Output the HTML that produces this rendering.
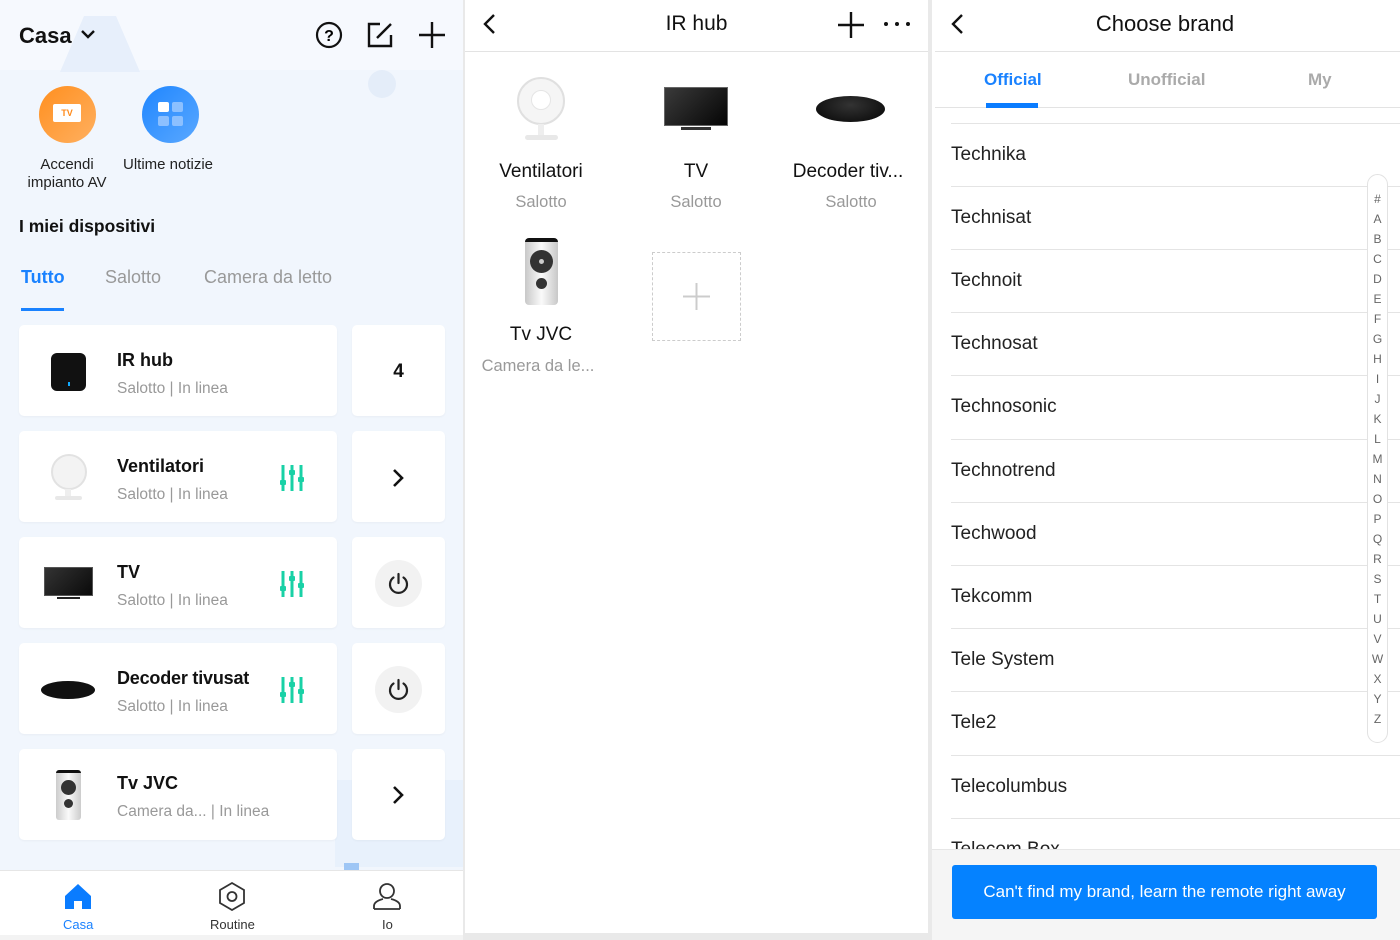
<!DOCTYPE html>
<html><head><meta charset="utf-8"><style>
*{margin:0;padding:0;box-sizing:border-box}
body{width:1400px;height:940px;overflow:hidden;background:#e9e9e9;font-family:"Liberation Sans",Roboto,sans-serif;position:relative;color:#111}
.abs{position:absolute}
#L{left:0;top:0;width:463px;height:940px;background:#f1f6fd;overflow:hidden}
#M{left:465px;top:0;width:463px;height:933px;background:#fff}
#R{left:932px;top:0;width:468px;height:940px;background:#fff}
.card{position:absolute;background:#fff;border-radius:5px;box-shadow:0 1px 2px rgba(0,0,0,.04)}
.nm{position:absolute;left:117px;font-size:18px;font-weight:bold;color:#111}
.sb{position:absolute;left:117px;font-size:15.5px;color:#999}
.row{position:absolute;left:951px;right:0;height:1px;background:#e4e4e4}
.br{position:absolute;left:951px;font-size:19px;color:#222}
.gi{position:absolute;text-align:center;width:150px}
</style></head><body>
<div id="L" class="abs">
  <div class="abs" style="left:0;top:0;width:463px;height:70px;background:#f6f9fe"></div>
  <div class="abs" style="left:60px;top:16px;width:80px;height:56px;background:#e7effb;clip-path:polygon(30% 0,70% 0,100% 100%,0 100%)"></div>
  <div class="abs" style="left:368px;top:70px;width:28px;height:28px;border-radius:50%;background:#e4edf9"></div>
  <div class="abs" style="left:19px;top:23px;font-size:22px;font-weight:bold">Casa</div>
  <svg class="abs" style="left:80px;top:28px" width="16" height="12"><path d="M2 3l6 6 6-6" fill="none" stroke="#111" stroke-width="2.4"/></svg>
  <svg class="abs" style="left:314px;top:20px" width="30" height="30"><circle cx="15" cy="15" r="12" fill="none" stroke="#111" stroke-width="2.2"/><text x="15" y="21" font-size="16" font-weight="bold" text-anchor="middle" font-family="Liberation Sans">?</text></svg>
  <svg class="abs" style="left:366px;top:21px" width="28" height="28"><path d="M14 3H3v22h22V14" fill="none" stroke="#111" stroke-width="2.4"/><path d="M11 17L25 3" stroke="#111" stroke-width="2.4"/></svg>
  <svg class="abs" style="left:417px;top:20px" width="30" height="30"><path d="M15 2v26M2 15h26" stroke="#111" stroke-width="2.4"/></svg>
  <div class="abs" style="left:39px;top:86px;width:57px;height:57px;border-radius:50%;background:linear-gradient(135deg,#ff8f1f,#ffb060)"></div>
  <div class="abs" style="left:53px;top:104px;width:28px;height:18px;background:#fff;border-radius:2px;font-size:9px;font-weight:bold;color:#ff8a1a;text-align:center;line-height:18px">TV</div>
  <div class="abs" style="left:142px;top:86px;width:57px;height:57px;border-radius:50%;background:linear-gradient(135deg,#1f86ff,#5aa8ff)"></div>
  <div class="abs" style="left:158px;top:102px;width:11px;height:10px;background:#fff;border-radius:2px"></div>
  <div class="abs" style="left:172px;top:102px;width:11px;height:10px;background:#8cc0ff;border-radius:2px"></div>
  <div class="abs" style="left:158px;top:116px;width:11px;height:10px;background:#8cc0ff;border-radius:2px"></div>
  <div class="abs" style="left:172px;top:116px;width:11px;height:10px;background:#8cc0ff;border-radius:2px"></div>
  <div class="abs" style="left:12px;top:156px;width:110px;text-align:center;font-size:15px;line-height:18px;color:#222">Accendi impianto AV</div>
  <div class="abs" style="left:123px;top:156px;font-size:15px;color:#222">Ultime notizie</div>
  <div class="abs" style="left:19px;top:216px;font-size:17.5px;font-weight:bold">I miei dispositivi</div>
  <div class="abs" style="left:21px;top:267px;font-size:18px;font-weight:bold;color:#1a82ff">Tutto</div>
  <div class="abs" style="left:21px;top:308px;width:43px;height:3px;background:#1a82ff"></div>
  <div class="abs" style="left:105px;top:267px;font-size:18px;color:#999">Salotto</div>
  <div class="abs" style="left:204px;top:267px;font-size:18px;color:#999">Camera da letto</div>

  <div class="abs" style="left:335px;top:780px;width:128px;height:87px;background:#e8f1fc"></div>
  <div class="abs" style="left:344px;top:863px;width:15px;height:7px;background:#9ec6f5"></div>

  <div class="card" style="left:19px;top:325px;width:318px;height:91px"></div>
  <div class="card" style="left:352px;top:325px;width:93px;height:91px;text-align:center;line-height:94px;font-size:19px;font-weight:bold">4</div>
  <div class="abs" style="left:51px;top:353px;width:35px;height:38px;background:#111;border-radius:6px"></div>
  <div class="abs" style="left:68px;top:382px;width:2px;height:4px;background:#1af"></div>
  <div class="nm" style="top:350px">IR hub</div><div class="sb" style="top:380px">Salotto | In linea</div>
  <div class="card" style="left:19px;top:431px;width:318px;height:91px"></div>
  <div class="card" style="left:352px;top:431px;width:93px;height:91px"></div>
  <div class="abs" style="left:51px;top:454px;width:36px;height:36px;border-radius:50%;background:#f3f3f3;border:2px solid #e2e2e2"></div>
  <div class="abs" style="left:65px;top:489px;width:6px;height:8px;background:#eee"></div>
  <div class="abs" style="left:55px;top:496px;width:27px;height:4px;border-radius:2px;background:#e8e8e8"></div>
  <div class="nm" style="top:456px">Ventilatori</div><div class="sb" style="top:486px">Salotto | In linea</div>
  <div class="card" style="left:19px;top:537px;width:318px;height:91px"></div>
  <div class="card" style="left:352px;top:537px;width:93px;height:91px"></div>
  <div class="abs" style="left:44px;top:567px;width:49px;height:29px;background:linear-gradient(135deg,#333,#0a0a0a);border:1px solid #555"></div>
  <div class="abs" style="left:57px;top:597px;width:23px;height:2px;background:#222"></div>
  <div class="nm" style="top:562px">TV</div><div class="sb" style="top:592px">Salotto | In linea</div>
  <div class="card" style="left:19px;top:643px;width:318px;height:91px"></div>
  <div class="card" style="left:352px;top:643px;width:93px;height:91px"></div>
  <div class="abs" style="left:41px;top:681px;width:54px;height:18px;background:#111;border-radius:50%"></div>
  <div class="nm" style="top:668px;letter-spacing:-0.2px">Decoder tivusat</div><div class="sb" style="top:698px">Salotto | In linea</div>
  <div class="card" style="left:19px;top:749px;width:318px;height:91px"></div>
  <div class="card" style="left:352px;top:749px;width:93px;height:91px"></div>
  <div class="abs" style="left:56px;top:770px;width:25px;height:50px;background:linear-gradient(90deg,#ccc,#fafafa,#ccc);border-radius:3px;border-top:3px solid #111"></div>
  <div class="abs" style="left:61px;top:780px;width:15px;height:15px;border-radius:50%;background:#333"></div>
  <div class="abs" style="left:64px;top:799px;width:9px;height:9px;border-radius:50%;background:#333"></div>
  <div class="nm" style="top:773px">Tv JVC</div><div class="sb" style="top:803px">Camera da... | In linea</div>

  <svg class="abs" style="left:280px;top:464px" width="26" height="28"><g stroke="#19d1a6" stroke-width="3"><path d="M3 1v26M12 1v26M21 1v26"/></g><g fill="#19d1a6"><rect x="0" y="16" width="6" height="5" rx="1"/><rect x="9" y="6" width="6" height="5" rx="1"/><rect x="18" y="13" width="6" height="5" rx="1"/></g></svg>
  <svg class="abs" style="left:280px;top:570px" width="26" height="28"><g stroke="#19d1a6" stroke-width="3"><path d="M3 1v26M12 1v26M21 1v26"/></g><g fill="#19d1a6"><rect x="0" y="16" width="6" height="5" rx="1"/><rect x="9" y="6" width="6" height="5" rx="1"/><rect x="18" y="13" width="6" height="5" rx="1"/></g></svg>
  <svg class="abs" style="left:280px;top:676px" width="26" height="28"><g stroke="#19d1a6" stroke-width="3"><path d="M3 1v26M12 1v26M21 1v26"/></g><g fill="#19d1a6"><rect x="0" y="16" width="6" height="5" rx="1"/><rect x="9" y="6" width="6" height="5" rx="1"/><rect x="18" y="13" width="6" height="5" rx="1"/></g></svg>
  <svg class="abs" style="left:391px;top:468px" width="14" height="20"><path d="M3 2l8 8-8 8" fill="none" stroke="#111" stroke-width="2.6"/></svg>
  <svg class="abs" style="left:391px;top:785px" width="14" height="20"><path d="M3 2l8 8-8 8" fill="none" stroke="#111" stroke-width="2.6"/></svg>
  <div class="abs" style="left:375px;top:560px;width:47px;height:47px;border-radius:50%;background:#f2f2f2"></div>
  <div class="abs" style="left:375px;top:666px;width:47px;height:47px;border-radius:50%;background:#f2f2f2"></div>
  <svg class="abs" style="left:386px;top:571px" width="25" height="25"><path d="M7.5 6.5a8.5 8.5 0 1 0 10 0" fill="none" stroke="#222" stroke-width="2.2" stroke-linecap="round"/><path d="M12.5 3v9" stroke="#222" stroke-width="2.2" stroke-linecap="round"/></svg>
  <svg class="abs" style="left:386px;top:677px" width="25" height="25"><path d="M7.5 6.5a8.5 8.5 0 1 0 10 0" fill="none" stroke="#222" stroke-width="2.2" stroke-linecap="round"/><path d="M12.5 3v9" stroke="#222" stroke-width="2.2" stroke-linecap="round"/></svg>

  <div class="abs" style="left:0;top:870px;width:463px;height:65px;background:#fff;border-top:1px solid #e6e6e6"></div>
  <div class="abs" style="left:0;top:935px;width:463px;height:5px;background:#f3f3f3"></div>
  <svg class="abs" style="left:64px;top:882px" width="28" height="28"><path d="M14 2L1 14v13h9v-8h8v8h9V14z" fill="#0a7cff"/></svg>
  <div class="abs" style="left:63px;top:917px;font-size:13px;color:#1a82ff">Casa</div>
  <svg class="abs" style="left:217px;top:881px" width="30" height="30"><path d="M15 2l12 7v13l-12 7-12-7V9z" fill="none" stroke="#333" stroke-width="1.8"/><circle cx="15" cy="15.5" r="4.5" fill="none" stroke="#333" stroke-width="1.8"/></svg>
  <div class="abs" style="left:210px;top:917px;font-size:13px;color:#333">Routine</div>
  <svg class="abs" style="left:372px;top:881px" width="30" height="30"><circle cx="15" cy="10" r="7" fill="none" stroke="#333" stroke-width="1.8"/><path d="M2 28v-3c0-4 5-6 9-7M28 28v-3c0-4-5-6-9-7M2 28h26" fill="none" stroke="#333" stroke-width="1.8"/></svg>
  <div class="abs" style="left:382px;top:917px;font-size:13px;color:#333">Io</div>
</div>

<div id="M" class="abs">
  <svg class="abs" style="left:17px;top:12px" width="16" height="26"><path d="M12 3L3 12l9 9" fill="none" stroke="#111" stroke-width="2.4"/></svg>
  <div class="abs" style="left:0;width:463px;top:12px;text-align:center;font-size:21px;color:#111">IR hub</div>
  <svg class="abs" style="left:372px;top:11px" width="28" height="28"><path d="M14 1v26M1 14h26" stroke="#111" stroke-width="2.4"/></svg>
  <div class="abs" style="left:419px;top:22px;width:4px;height:4px;border-radius:50%;background:#111;box-shadow:11px 0 #111,22px 0 #111"></div>
  <div class="abs" style="left:0;top:51px;width:463px;height:1px;background:#e3e3e3"></div>
  <div class="abs" style="left:52px;top:77px;width:48px;height:48px;border-radius:50%;background:#f5f5f5;border:2px solid #e0e0e0"></div>
  <div class="abs" style="left:66px;top:90px;width:20px;height:20px;border-radius:50%;background:#fff;border:1px solid #e5e5e5"></div>
  <div class="abs" style="left:73px;top:124px;width:6px;height:12px;background:#eee"></div>
  <div class="abs" style="left:60px;top:135px;width:33px;height:5px;border-radius:3px;background:#e8e8e8"></div>
  <div class="abs" style="left:199px;top:87px;width:64px;height:39px;background:linear-gradient(135deg,#3a3a3a,#050505);border:1px solid #666"></div>
  <div class="abs" style="left:216px;top:127px;width:30px;height:3px;background:#333"></div>
  <div class="abs" style="left:351px;top:96px;width:69px;height:26px;background:radial-gradient(ellipse at 50% 35%,#333,#050505);border-radius:50%"></div>
  <div class="gi" style="left:1px;top:161px;font-size:19px">Ventilatori</div>
  <div class="gi" style="left:1px;top:193px;font-size:16.5px;color:#999">Salotto</div>
  <div class="gi" style="left:156px;top:161px;font-size:19px">TV</div>
  <div class="gi" style="left:156px;top:193px;font-size:16.5px;color:#999">Salotto</div>
  <div class="gi" style="left:308px;top:161px;font-size:19px">Decoder tiv...</div>
  <div class="gi" style="left:311px;top:193px;font-size:16.5px;color:#999">Salotto</div>
  <div class="abs" style="left:60px;top:238px;width:33px;height:67px;border-radius:4px;background:linear-gradient(90deg,#c8c8c8,#fafafa 50%,#c8c8c8);border-top:4px solid #111"></div>
  <div class="abs" style="left:65px;top:250px;width:23px;height:23px;border-radius:50%;background:#333"></div>
  <div class="abs" style="left:74px;top:259px;width:5px;height:5px;border-radius:50%;background:#ccc"></div>
  <div class="abs" style="left:71px;top:278px;width:11px;height:11px;border-radius:50%;background:#333"></div>
  <div class="gi" style="left:1px;top:324px;font-size:19px">Tv JVC</div>
  <div class="gi" style="left:-2px;top:357px;font-size:16.5px;color:#999">Camera da le...</div>
  <div class="abs" style="left:187px;top:252px;width:89px;height:89px;border:1px dashed #ccc"></div>
  <svg class="abs" style="left:217px;top:282px" width="29" height="29"><path d="M14.5 1v27M1 14.5h27" stroke="#ccc" stroke-width="2"/></svg>
</div>

<div id="R" class="abs">
  <svg class="abs" style="left:18px;top:12px" width="16" height="26"><path d="M12 3L3 12l9 9" fill="none" stroke="#111" stroke-width="2.4"/></svg>
  <div class="abs" style="left:0;width:466px;top:11px;text-align:center;font-size:22px;color:#111">Choose brand</div>
  <div class="abs" style="left:3px;top:51px;width:465px;height:1px;background:#e3e3e3"></div>
  <div class="abs" style="left:52px;top:70px;font-size:17px;font-weight:bold;color:#1a82ff">Official</div>
  <div class="abs" style="left:196px;top:70px;font-size:17px;font-weight:bold;color:#aaa">Unofficial</div>
  <div class="abs" style="left:376px;top:70px;font-size:17px;font-weight:bold;color:#aaa">My</div>
  <div class="abs" style="left:3px;top:107px;width:465px;height:1px;background:#e3e3e3"></div>
  <div class="abs" style="left:54px;top:103px;width:52px;height:5px;background:#0a7cff"></div>
</div>
<div class="row" style="top:123px"></div><div class="br" style="top:144px">Technika</div>
<div class="row" style="top:186px"></div><div class="br" style="top:207px">Technisat</div>
<div class="row" style="top:249px"></div><div class="br" style="top:270px">Technoit</div>
<div class="row" style="top:312px"></div><div class="br" style="top:333px">Technosat</div>
<div class="row" style="top:375px"></div><div class="br" style="top:396px">Technosonic</div>
<div class="row" style="top:439px"></div><div class="br" style="top:460px">Technotrend</div>
<div class="row" style="top:502px"></div><div class="br" style="top:523px">Techwood</div>
<div class="row" style="top:565px"></div><div class="br" style="top:586px">Tekcomm</div>
<div class="row" style="top:628px"></div><div class="br" style="top:649px">Tele System</div>
<div class="row" style="top:691px"></div><div class="br" style="top:712px">Tele2</div>
<div class="row" style="top:755px"></div><div class="br" style="top:776px">Telecolumbus</div>
<div class="row" style="top:818px"></div><div class="br" style="top:839px">Telecom Box</div>
<div class="abs" style="left:1367px;top:174px;width:21px;height:569px;border:1px solid #e2e2e2;border-radius:11px;background:#fff;font-size:12px;color:#666;text-align:center;line-height:20px;padding-top:14px">#<br>A<br>B<br>C<br>D<br>E<br>F<br>G<br>H<br>I<br>J<br>K<br>L<br>M<br>N<br>O<br>P<br>Q<br>R<br>S<br>T<br>U<br>V<br>W<br>X<br>Y<br>Z</div>
<div class="abs" style="left:932px;top:849px;width:468px;height:91px;background:#f5f5f5;border-top:1px solid #e6e6e6"></div>
<div class="abs" style="left:952px;top:865px;width:425px;height:54px;background:#0582ff;border-radius:3px;color:#fff;font-size:17px;text-align:center;line-height:54px">Can't find my brand, learn the remote right away</div>
</body></html>
